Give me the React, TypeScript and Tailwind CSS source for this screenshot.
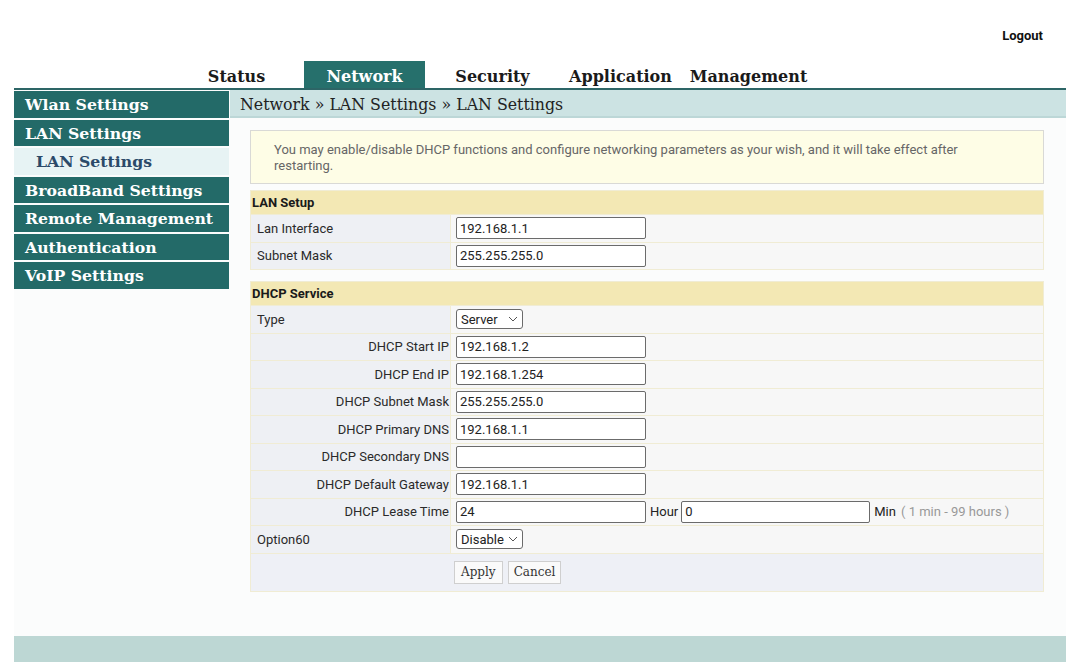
import React from "react";

const tabs = ["Status", "Network", "Security", "Application", "Management"];

const menu = [
  { label: "Wlan Settings" },
  { label: "LAN Settings" },
  { label: "LAN Settings", sub: true },
  { label: "BroadBand Settings" },
  { label: "Remote Management" },
  { label: "Authentication" },
  { label: "VoIP Settings" },
];

const Chevron = () => (
  <svg width="10" height="6" viewBox="0 0 10 6" className="shrink-0">
    <polyline points="1,1 5,5 9,1" fill="none" stroke="#555" strokeWidth="1" />
  </svg>
);

const TextBox = ({ value, w = "w-[190px]" }: { value: string; w?: string }) => (
  <input
    readOnly
    value={value}
    className={`${w} h-[22px] border border-[#6b6b6b] rounded-[2px] bg-white px-[3px] text-[13px] text-[#222] outline-none`}
  />
);

const Select = ({ value }: { value: string }) => (
  <div className="w-[67px] h-[20px] border border-[#6b6b6b] rounded-[3px] bg-white flex items-center justify-between pl-[4px] pr-[4px] text-[13px] text-[#222]">
    <span>{value}</span>
    <Chevron />
  </div>
);

const Row = ({
  label,
  right,
  children,
}: {
  label: string;
  right?: boolean;
  children: React.ReactNode;
}) => (
  <div className="flex h-[26.5px] gap-px">
    <div
      className={`w-[199px] bg-[#eef0f4] flex items-center text-[13px] text-[#2a2a2a] ${
        right ? "justify-end pr-[1px]" : "pl-[6px]"
      }`}
    >
      {label}
    </div>
    <div className="flex-1 bg-[#f7f7f7] flex items-center pl-[5px] text-[13px] text-[#222]">
      {children}
    </div>
  </div>
);

const Header = ({ title }: { title: string }) => (
  <div className="h-[23px] bg-[#f3e8b4] flex items-center px-px text-[13px] font-bold text-[#1a1a1a]">
    {title}
  </div>
);

export default function App() {
  return (
    <div className="w-[1080px] h-[662px] bg-white overflow-hidden font-['Roboto',sans-serif]">
      <div className="h-[61px] flex justify-end items-start pt-[26px] pr-[37px]">
        <a className="text-[13px] font-bold text-[#111] cursor-pointer">Logout</a>
      </div>

      <div className="mx-[14px]">
        <nav className="flex h-[27px] pl-[162px] gap-[7px]">
          {tabs.map((t) => (
            <div
              key={t}
              className={`w-[121px] flex items-center justify-center pt-[4px] text-[16px] font-bold font-['DejaVu_Serif',serif] ${
                t === "Network" ? "bg-[#26706c] text-white" : "text-[#1a1a1a]"
              }`}
            >
              {t}
            </div>
          ))}
        </nav>
        <div className="h-[2px] bg-[#2d6566]" />

        <div className="flex h-[546px] bg-[#fbfcfc]">
          <aside className="w-[215px] pt-px flex flex-col">
            {menu.map((m, i) => (
              <div
                key={i}
                className={`h-[26.5px] mb-[2px] flex items-center pt-[2px] font-bold text-[15.7px] font-['DejaVu_Serif',serif] ${
                  m.sub
                    ? "bg-[#e7f3f4] text-[#2b4a69] pl-[22px]"
                    : "bg-[#236a68] text-white pl-[11px]"
                }`}
              >
                {m.label}
              </div>
            ))}
          </aside>

          <main className="flex-1 ml-px">
            <div className="h-[28px] bg-[#cce3e3] border-b-2 border-[#bcd7d7] flex items-center pt-[3px] pl-[10px] text-[15.8px] text-[#222] font-['DejaVu_Serif',serif]">
              Network » LAN Settings » LAN Settings
            </div>

            <div className="pl-[20px] pr-[22px]">
              <div className="mt-[12px] border border-[#d9d9d6] bg-[#fefde6] px-[23px] pt-[11px] pb-[9px] text-[13px] leading-[16px] text-[#666]">
                You may enable/disable DHCP functions and configure networking parameters as your
                wish, and it will take effect after restarting.
              </div>

              <div className="mt-[6px] bg-[#f0ecd4] p-px flex flex-col gap-px">
                <Header title="LAN Setup" />
                <Row label="Lan Interface">
                  <TextBox value="192.168.1.1" />
                </Row>
                <Row label="Subnet Mask">
                  <TextBox value="255.255.255.0" />
                </Row>
              </div>

              <div className="mt-[11px] bg-[#f0ecd4] p-px flex flex-col gap-px">
                <Header title="DHCP Service" />
                <Row label="Type">
                  <Select value="Server" />
                </Row>
                <Row label="DHCP Start IP" right>
                  <TextBox value="192.168.1.2" />
                </Row>
                <Row label="DHCP End IP" right>
                  <TextBox value="192.168.1.254" />
                </Row>
                <Row label="DHCP Subnet Mask" right>
                  <TextBox value="255.255.255.0" />
                </Row>
                <Row label="DHCP Primary DNS" right>
                  <TextBox value="192.168.1.1" />
                </Row>
                <Row label="DHCP Secondary DNS" right>
                  <TextBox value="" />
                </Row>
                <Row label="DHCP Default Gateway" right>
                  <TextBox value="192.168.1.1" />
                </Row>
                <Row label="DHCP Lease Time" right>
                  <TextBox value="24" />
                  <span className="ml-[4px]">Hour</span>
                  <span className="ml-[3px]">
                    <TextBox value="0" w="w-[189px]" />
                  </span>
                  <span className="ml-[4px]">Min</span>
                  <span className="ml-[5px] text-[#999]">( 1 min - 99 hours )</span>
                </Row>
                <Row label="Option60">
                  <Select value="Disable" />
                </Row>
                <div className="h-[37px] bg-[#eef0f6] flex items-center pl-[203px] gap-[5px]">
                  <button className="h-[23px] px-[6px] border border-[#cfcfcf] bg-[#fafafa] text-[12px] text-[#333] font-['DejaVu_Serif',serif]">
                    Apply
                  </button>
                  <button className="h-[23px] px-[5px] border border-[#cfcfcf] bg-[#fafafa] text-[12px] text-[#333] font-['DejaVu_Serif',serif]">
                    Cancel
                  </button>
                </div>
              </div>
            </div>
          </main>
        </div>

        <div className="h-[26px] bg-[#bdd7d4]" />
      </div>
    </div>
  );
}
